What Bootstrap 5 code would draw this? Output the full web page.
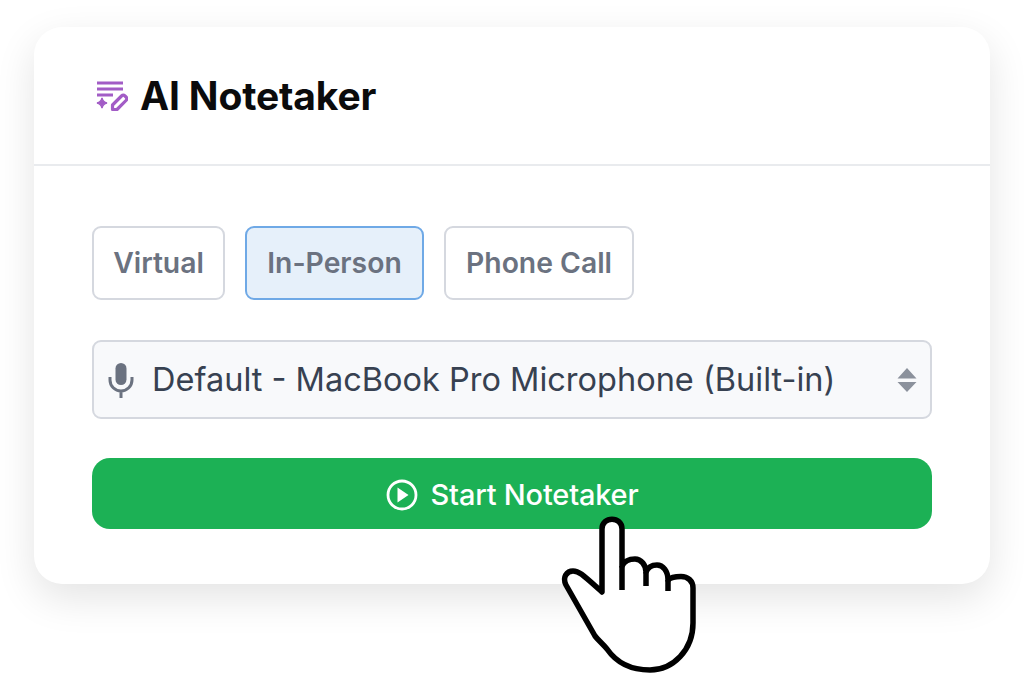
<!DOCTYPE html>
<html lang="en">
<head>
<meta charset="UTF-8">
<meta name="viewport" content="width=device-width, initial-scale=1.0">
<title>AI Notetaker</title>
<link href="https://cdn.jsdelivr.net/npm/bootstrap@5.3.3/dist/css/bootstrap.min.css" rel="stylesheet">
<script src="https://cdn.jsdelivr.net/npm/bootstrap@5.3.3/dist/js/bootstrap.bundle.min.js"></script>
<style>
body { background: #fff; font-family: Inter, "Liberation Sans", sans-serif; height: 699px; overflow: hidden; }
.stage { position: relative; padding: 27px 34px 0; }
.note-card { height: 557px; border: 0; border-radius: 28px; box-shadow: 0 14px 40px rgba(0,0,0,.11); }
.note-head { height: 139px; padding: 0 0 0 62px; border-bottom: 2px solid #e9ebee; gap: 12px; }
.note-title { font-size: 39px; font-weight: 700; letter-spacing: -.15px; color: #0b0b0c; margin: 0; padding-top: 2px; }
.note-body { padding: 60px 58px 0; }
.mode-btn { width: 133px; height: 74px; font-size: 28.300px; font-weight: 600; color: #6b7280; background: #fff; border: 2.500px solid #d5d8df; border-radius: 9px; padding: 0; }
.mode-btn.picked { width: 179px; background: #e6f0fa; border-color: #6fa9e6; }
.mode-btn.wide { width: 190px; }
.mode-row { gap: 20px; margin-bottom: 40px; }
.mic-box { height: 79px; background: #f8f9fb; border: 2.500px solid #d5d8df; border-radius: 9px; padding: 1px 13px 0 14px; color: #374151; font-size: 32.500px; gap: 18px; margin-bottom: 39px; }
.start-btn { height: 71px; background: #1cb155; border: 0; border-radius: 18px; color: #fff; font-size: 29px; font-weight: 500; gap: 13px; letter-spacing: -.2px; padding: 2px 0 0; }
.start-btn:hover { background: #1cb155; color: #fff; }
.hand { position: absolute; left: 540px; top: 500px; }
</style>
</head>
<body>
<div class="stage">
  <div class="card note-card">
    <div class="note-head d-flex align-items-center">
      <svg width="32" height="32" viewBox="0 0 32 32" fill="none">
        <path d="M1 3h26M1 9h26M1 15h16" stroke="#a25cc6" stroke-width="3"/>
        <path d="M6 18c.7 3.200 1.800 4.300 5 5-3.200.7-4.300 1.800-5 5-.7-3.200-1.800-4.300-5-5 3.200-.7 4.300-1.800 5-5z" fill="#a25cc6" stroke="#a25cc6" stroke-width="1.400"/>
        <path d="M16.500 29.500v-4.500l9-9a2.500 2.500 0 0 1 3.500 0l1 1a2.500 2.500 0 0 1 0 3.500l-9 9z" stroke="#a25cc6" stroke-width="3.200" stroke-linejoin="round"/>
      </svg>
      <h1 class="note-title">AI Notetaker</h1>
    </div>
    <div class="note-body">
      <div class="d-flex mode-row">
        <button type="button" class="btn mode-btn">Virtual</button>
        <button type="button" class="btn mode-btn picked">In-Person</button>
        <button type="button" class="btn mode-btn wide">Phone Call</button>
      </div>
      <div class="d-flex align-items-center mic-box">
        <svg width="26" height="36" viewBox="0 0 26 36" fill="none">
          <rect x="7.500" y="1" width="11" height="22" rx="5.500" fill="#6b7280"/>
          <path d="M2 15v3a11 11 0 0 0 22 0v-3M13 29v7" stroke="#6b7280" stroke-width="3"/>
        </svg>
        <span class="flex-grow-1">Default - MacBook Pro Microphone (Built-in)</span>
        <svg width="20" height="26" viewBox="0 0 20 26">
          <path d="M10 1l9.500 10.500H.5zM10 25L.5 15h19z" fill="#8b919c"/>
        </svg>
      </div>
      <button type="button" class="btn start-btn w-100 d-flex align-items-center justify-content-center">
        <svg width="32" height="32" viewBox="0 0 32 32" fill="none">
          <circle cx="16" cy="16" r="14" stroke="#fff" stroke-width="2.800"/>
          <path d="M11.500 8.500l11 7.500-11 7.500z" fill="#fff"/>
        </svg>
        <span>Start Notetaker</span>
      </button>
    </div>
  </div>
  <svg class="hand" width="180" height="180" viewBox="0 0 180 180" fill="none">
    <path d="M62 92V29c0-13 20-13 20 0v37C85 60 90 59 95 59c6 0 11 6 11 13 2-5 6-7 11-7 6 0 11 6 11 15 3-3 8-3.500 13-3.500 7 0 12 4.500 12 11.500v35c0 27-20 47-43 47-20 0-34-8-43-21-5-6-9-9-12-13L26 85c-4-8 1-14 7-14 6 0 9 3 29 21z" fill="#fff" stroke="#000" stroke-width="5.500" stroke-linejoin="round"/>
    <path d="M82 66v24M106 72v14M128 80v11" stroke="#000" stroke-width="5.500"/>
  </svg>
</div>
</body>
</html>
